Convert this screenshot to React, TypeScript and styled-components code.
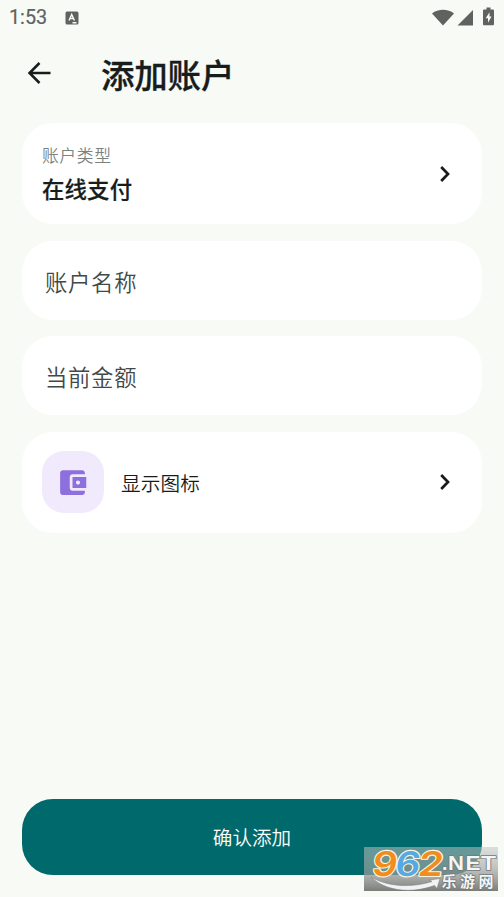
import React from "react";
import styled, { createGlobalStyle } from "styled-components";

const GlobalStyle = createGlobalStyle`
  * { box-sizing: border-box; }
  body { margin: 0; background: #f8faf6; }
  button { border: 0; font: inherit; }
`;

const Screen = styled.div`
  position: relative;
  width: 504px;
  height: 897px;
  display: flex;
  flex-direction: column;
  overflow: hidden;
  background: #f8faf6;
  color: #171d1d;
  font-family: "Noto Sans CJK SC", sans-serif;
`;

const StatusBar = styled.header`
  height: 36px;
  padding: 0 9px;
  display: flex;
  align-items: center;
  color: #60625f;
`;

const Clock = styled.span`
  width: 56px;
  font: 400 19.8px/36px Roboto, sans-serif;
  -webkit-text-stroke: 0.2px currentColor;
`;

const StatusIcons = styled.div`
  margin-left: auto;
  display: flex;
  svg { display: block; }
`;

const AppBar = styled.div`
  height: 87.4px;
  padding: 22px 0 0 26px;
  display: flex;
  align-items: flex-start;
`;

const BackButton = styled.button`
  width: 75px;
  height: 30px;
  padding: 0;
  background: none;
  color: #171d1d;
  text-align: left;
  svg { display: block; }
`;

const Title = styled.h1`
  margin: -8px 0 0;
  font-size: 33.5px;
  font-weight: 500;
  line-height: 48px;
  letter-spacing: -0.2px;
  -webkit-text-stroke: 0.3px currentColor;
`;

const Form = styled.main`
  display: flex;
  flex-direction: column;
  gap: 16.6px;
  padding: 0 22.4px;
`;

const Card = styled.section<{ $height: number; $inset: number }>`
  height: ${(p) => p.$height}px;
  padding: 0 25.6px 0 ${(p) => p.$inset}px;
  border-radius: 31px;
  background: #fff;
  display: flex;
  align-items: center;
`;

const CardText = styled.div`
  flex: 1;
`;

const Label = styled.div`
  color: #7b8382;
  font-size: 16.8px;
  font-weight: 350;
  line-height: 26px;
  letter-spacing: 0.7px;
`;

const Value = styled.div`
  margin-top: 3px;
  font-size: 22.4px;
  font-weight: 500;
  line-height: 34px;
  letter-spacing: 0.2px;
  -webkit-text-stroke: 0.2px currentColor;
`;

const Placeholder = styled.span`
  color: #3f4948;
  font-size: 22.4px;
  font-weight: 350;
  line-height: 34px;
  letter-spacing: 0.7px;
  padding-top: 1px;
`;

const IconTile = styled.div`
  width: 62px;
  height: 62px;
  margin-right: 17px;
  border-radius: 22px;
  display: grid;
  place-items: center;
  background: #f0eafc;
  color: #8d6fdd;
`;

const RowText = styled.span`
  flex: 1;
  font-size: 19.6px;
  font-weight: 350;
  line-height: 30px;
  padding-top: 1px;
  letter-spacing: 0.2px;
`;

const ConfirmButton = styled.button`
  height: 75.6px;
  margin: auto 22.4px 22.4px;
  padding: 0;
  border-radius: 31px;
  background: #00696c;
  color: #fff;
  font-size: 19.6px;
  font-weight: 350;
`;

const Watermark = styled.svg`
  position: absolute;
  left: 364px;
  top: 847px;
  overflow: visible;
`;

const Chevron = () => (
  <svg width="22" height="22" viewBox="0 0 22 22" fill="none">
    <path d="M7.200 4 14 11 7.200 18" stroke="#17191b" strokeWidth="2.700" />
  </svg>
);

const BrandMark = () => (
  <Watermark width="134" height="44" viewBox="0 0 134 44">
    <defs>
      <linearGradient id="plate" x1="0" y1="0" x2="0" y2="1">
        <stop offset="0" stopColor="#c2c5c3" stopOpacity=".52" />
        <stop offset=".5" stopColor="#a1a4a2" stopOpacity=".67" />
        <stop offset="1" stopColor="#767876" stopOpacity=".96" />
      </linearGradient>
    </defs>
    <rect width="134" height="44" fill="url(#plate)" />
    <path d="M7 30C24 40 48 41 68 34.500L65.500 33 76 31.500 73 41.500 70.500 38.500C47 47 21 44 7 30Z" fill="#f1f2f1" stroke="#777" strokeWidth=".5" />
    <g fontFamily="Inter, sans-serif" fontWeight="600" fontSize="34" paintOrder="stroke" stroke="#fff4df" strokeWidth="2.200" strokeLinejoin="round" transform="translate(7 28.500) skewX(-8)">
      <text x="0" y="0" textLength="25" lengthAdjust="spacingAndGlyphs" fill="#ef8d21">9</text>
      <text x="23" y="0" textLength="25" lengthAdjust="spacingAndGlyphs" fill="#55a9e4">6</text>
      <text x="46" y="0" textLength="25" lengthAdjust="spacingAndGlyphs" fill="#ef8d21">2</text>
    </g>
    <g fill="#f3f6f6" stroke="#72777a" strokeWidth="1.400" paintOrder="stroke" strokeLinejoin="round">
      <g fontFamily="Liberation Sans, sans-serif" fontWeight="700" fontSize="19.500">
        <text x="78" y="22.500">.</text>
        <text x="84" y="22.500" textLength="16" lengthAdjust="spacingAndGlyphs">N</text>
        <text x="101.500" y="22.500" textLength="15" lengthAdjust="spacingAndGlyphs">E</text>
        <text x="117" y="22.500" textLength="15" lengthAdjust="spacingAndGlyphs">T</text>
      </g>
      <text x="77.500" y="40" fontFamily="Noto Sans CJK SC, sans-serif" fontWeight="700" fontSize="15" textLength="52">乐游网</text>
    </g>
  </Watermark>
);

export default function App() {
  return (
    <Screen>
      <GlobalStyle />
      <StatusBar>
        <Clock>1:53</Clock>
        <svg width="14" height="15" viewBox="0 0 14 15">
          <rect x=".5" y=".5" width="13" height="13" rx="1.500" fill="#60625f" />
          <path d="M4 9.500 6.700 3.500 9.400 9.500M5 7.500h3.500M7.500 11.700h4" fill="none" stroke="#f8faf6" strokeWidth="1.400" />
        </svg>
        <StatusIcons>
          <svg width="64" height="22" viewBox="0 0 64 22" fill="#60625f">
            <path d="M1 6.500C7 1.600 17 1.600 23 6.500L12 18.500Z" />
            <path d="M42 3V18.500H26.500Z" />
            <path d="M55.500.5h4v2h2.200c.8 0 1.300.5 1.300 1.300v13.100c0 .8-.5 1.300-1.300 1.300h-8.400c-.8 0-1.300-.5-1.300-1.300V3.800c0-.8.5-1.300 1.300-1.300h2.200Z" />
            <path d="m58.500 5.200-3.800 6h2.300v4.500l3.500-6.300h-2Z" fill="#f8faf6" />
          </svg>
        </StatusIcons>
      </StatusBar>
      <AppBar>
        <BackButton aria-label="返回">
          <svg width="28" height="30" viewBox="0 0 28 30" fill="none" stroke="currentColor" strokeWidth="2.500">
            <path d="M24.500 15H4M13.500 5 3.500 15l10 10" />
          </svg>
        </BackButton>
        <Title>添加账户</Title>
      </AppBar>
      <Form>
        <Card $height={100.8} $inset={19.5}>
          <CardText>
            <Label>账户类型</Label>
            <Value>在线支付</Value>
          </CardText>
          <Chevron />
        </Card>
        <Card $height={79} $inset={22.5}>
          <Placeholder>账户名称</Placeholder>
        </Card>
        <Card $height={79} $inset={22.5}>
          <Placeholder>当前金额</Placeholder>
        </Card>
        <Card $height={100.8} $inset={19.5}>
          <IconTile>
            <svg width="33" height="33" viewBox="0 0 24 24" fill="currentColor">
              <path d="M21 18v1c0 1.100-.9 2-2 2H5c-1.110 0-2-.9-2-2V5c0-1.100.89-2 2-2h14c1.100 0 2 .9 2 2v1h-9c-1.110 0-2 .9-2 2v8c0 1.100.89 2 2 2h9zm-9-2h10V8H12v8zm4-2.500c-.83 0-1.500-.67-1.500-1.500s.67-1.500 1.500-1.500 1.500.67 1.500 1.500-.67 1.500-1.500 1.500z" />
            </svg>
          </IconTile>
          <RowText>显示图标</RowText>
          <Chevron />
        </Card>
      </Form>
      <ConfirmButton>确认添加</ConfirmButton>
      <BrandMark />
    </Screen>
  );
}
